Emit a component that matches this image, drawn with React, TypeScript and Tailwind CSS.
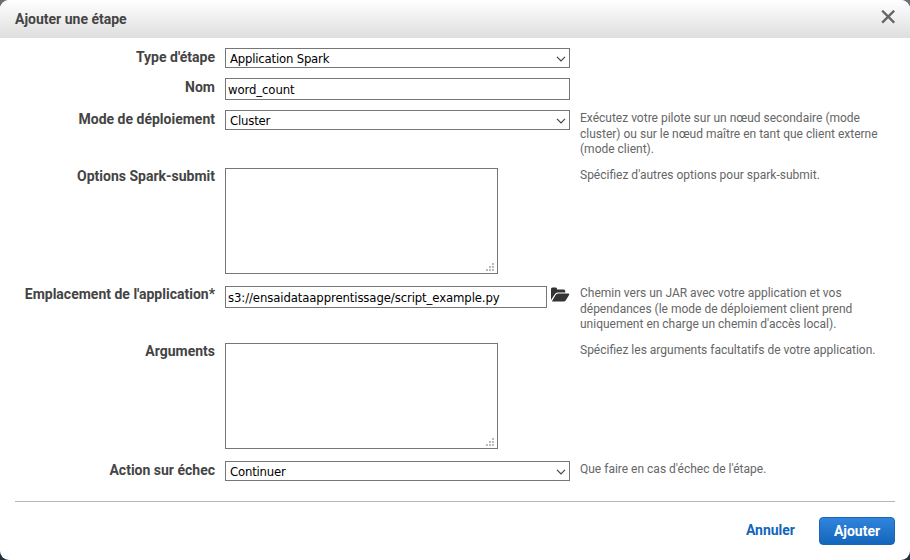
import type { ReactNode } from 'react';

const fieldText = "font-['DejaVu_Sans_Condensed','DejaVu_Sans',sans-serif] [font-stretch:condensed] text-[13px] leading-[18px] text-black whitespace-nowrap";

function Row({ label, help, height, labelShift = 'mt-0', helpShift = 'mt-0', children }: { label: string; help?: ReactNode; height: string; labelShift?: string; helpShift?: string; children: ReactNode }) {
  return (
    <div className={`flex shrink-0 items-start ${height}`}>
      <div className={`w-[215px] text-right text-[14px] leading-[18px] font-bold text-[#444] whitespace-nowrap ${labelShift}`}>{label}</div>
      <div className="ml-[10px] flex w-[345px]">{children}</div>
      <div className={`ml-[10px] w-[310px] text-[12px] leading-[15.6px] text-[#666] whitespace-nowrap ${helpShift}`}>{help}</div>
    </div>
  );
}

function SelectBox({ value }: { value: string }) {
  return (
    <div className="flex h-5 w-[345px] items-center justify-between border border-[#767676] bg-white pr-[3px] pl-1">
      <span className={`${fieldText} mt-[2px] tracking-[-0.2px]`}>{value}</span>
      <svg width="10" height="6" viewBox="0 0 10 6" fill="none" className="mt-[2px]">
        <path d="M1 .8 5 4.8 9 .8" stroke="#444" strokeWidth="1.2" />
      </svg>
    </div>
  );
}

function TextBox({ value, width }: { value: string; width: string }) {
  return (
    <div className={`flex h-[22px] shrink-0 items-center border border-[#767676] bg-white pl-[2px] ${width}`}>
      <span className={`${fieldText} mt-px tracking-[-0.11px]`}>{value}</span>
    </div>
  );
}

function TextArea() {
  return (
    <div className="flex h-[106px] w-[273px] items-end justify-end border border-[#767676] bg-white pr-[3px] pb-[2px]">
      <svg width="8" height="8" viewBox="0 0 8 8" fill="#bbb" shapeRendering="crispEdges">
        <path d="M6 0h2v2H6zM3 3h2v2H3zM6 3h2v2H6zM0 6h2v2H0zM3 6h2v2H3zM6 6h2v2H6z" />
      </svg>
    </div>
  );
}

export default function App() {
  return (
    <div className="h-[560px] w-[910px] overflow-hidden bg-linear-to-b from-[#687078] to-[#232f3e] font-[Roboto,sans-serif]">
      <div className="flex h-[560px] flex-col overflow-hidden rounded-[9px] bg-white">
        <header className="flex h-[38px] shrink-0 items-center justify-between bg-linear-to-b from-white to-[#dedede] pr-[15px] pl-[15px]">
          <h1 className="text-[14px] leading-[18px] font-bold text-[#444]">Ajouter une étape</h1>
          <svg width="14" height="14" viewBox="0 0 14 14" fill="none" className="-mt-[5px]">
            <path d="M1.2 .7 13.2 12.7M13.2 .7 1.2 12.7" stroke="#666" strokeWidth="2.4" />
          </svg>
        </header>
        <main className="flex flex-col pt-[10px]">
          <Row label="Type d'étape" height="h-[30px]"><SelectBox value="Application Spark" /></Row>
          <Row label="Nom" height="h-8"><TextBox value="word_count" width="w-[345px]" /></Row>
          <Row label="Mode de déploiement" height="h-[58px]" helpShift="mt-px" help={<>Exécutez votre pilote sur un nœud secondaire (mode<br />cluster) ou sur le nœud maître en tant que client externe<br />(mode client).</>}><SelectBox value="Cluster" /></Row>
          <Row label="Options Spark-submit" height="h-[118px]" labelShift="-mt-px" help="Spécifiez d'autres options pour spark-submit."><TextArea /></Row>
          <Row label="Emplacement de l'application*" height="h-[57px]" labelShift="-mt-px" help={<>Chemin vers un JAR avec votre application et vos<br />dépendances (le mode de déploiement client prend<br />uniquement en charge un chemin d'accès local).</>}>
            <TextBox value="s3://ensaidataapprentissage/script_example.py" width="w-[322px]" />
            <svg width="19" height="16" viewBox="0 0 20 16" preserveAspectRatio="none" fill="#333" className="mt-[1px] ml-1 shrink-0">
              <path d="M0 13V2Q0 .5 1.5.5H5Q6.3.5 6.5 2.4H13.5Q15 2.4 15 4V5.5H7.2Q5 5.5 3.8 7.5Z" />
              <path d="M.9 14.4 4.8 8Q5.7 6.5 7.5 6.5H18.4Q20 6.5 19 8L15.8 13Q14.8 14.6 13.2 14.6H1.6Q1 14.6.9 14.4Z" />
            </svg>
          </Row>
          <Row label="Arguments" height="h-[118px]" labelShift="-mt-px" help="Spécifiez les arguments facultatifs de votre application."><TextArea /></Row>
          <Row label="Action sur échec" height="h-10" helpShift="mt-px" help="Que faire en cas d'échec de l'étape."><SelectBox value="Continuer" /></Row>
        </main>
        <footer className="mx-[15px] flex items-start justify-end border-t border-[#b7b7b7] pt-[15px]">
          <button className="mr-[24px] mt-[4px] text-[14px] leading-[18px] font-bold text-[#1166bb]">Annuler</button>
          <button className="h-7 w-[76px] rounded-[4px] border border-[#1a65b8] bg-linear-to-b from-[#3184dc] to-[#1166bb] text-[14px] leading-[26px] font-bold text-white">Ajouter</button>
        </footer>
      </div>
    </div>
  );
}
